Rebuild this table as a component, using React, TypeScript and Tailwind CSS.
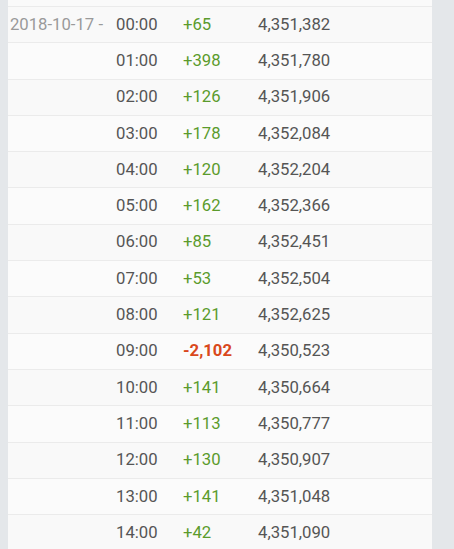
const rows = [
  { date: "2018-10-17 -", time: "00:00", delta: "+65", total: "4,351,382" },
  { time: "01:00", delta: "+398", total: "4,351,780" },
  { time: "02:00", delta: "+126", total: "4,351,906" },
  { time: "03:00", delta: "+178", total: "4,352,084" },
  { time: "04:00", delta: "+120", total: "4,352,204" },
  { time: "05:00", delta: "+162", total: "4,352,366" },
  { time: "06:00", delta: "+85", total: "4,352,451" },
  { time: "07:00", delta: "+53", total: "4,352,504" },
  { time: "08:00", delta: "+121", total: "4,352,625" },
  { time: "09:00", delta: "-2,102", total: "4,350,523" },
  { time: "10:00", delta: "+141", total: "4,350,664" },
  { time: "11:00", delta: "+113", total: "4,350,777" },
  { time: "12:00", delta: "+130", total: "4,350,907" },
  { time: "13:00", delta: "+141", total: "4,351,048" },
  { time: "14:00", delta: "+42", total: "4,351,090" },
];

export default function App() {
  return (
    <div className="flex h-[549px] w-[454px] overflow-hidden bg-[#e4e7ea] font-['Roboto',sans-serif] text-[16.7px]">
      <div className="ml-[8px] w-[424px] bg-[#fafafa]">
        <div className="h-[6px]" />
        {rows.map((r, i) => {
          const neg = r.delta.startsWith("-");
          return (
            <div
              key={r.time}
              className={`flex h-[36.3px] items-center border-t border-[#ebebeb] leading-5 ${
                i % 2 === 0 ? "bg-[#f9f9f9]" : "bg-[#fbfbfb]"
              }`}
            >
              <div className="w-[95px] text-right text-[#9a9a9a]">{r.date ?? ""}</div>
              <div className="ml-[13px] w-[67px] text-[#555]">{r.time}</div>
              <div
                className={`w-[75px] ${
                  neg ? "font-bold text-[#d9481c]" : "text-[#5b9b2c]"
                }`}
              >
                {r.delta}
              </div>
              <div className="text-[#555]">{r.total}</div>
            </div>
          );
        })}
      </div>
    </div>
  );
}
